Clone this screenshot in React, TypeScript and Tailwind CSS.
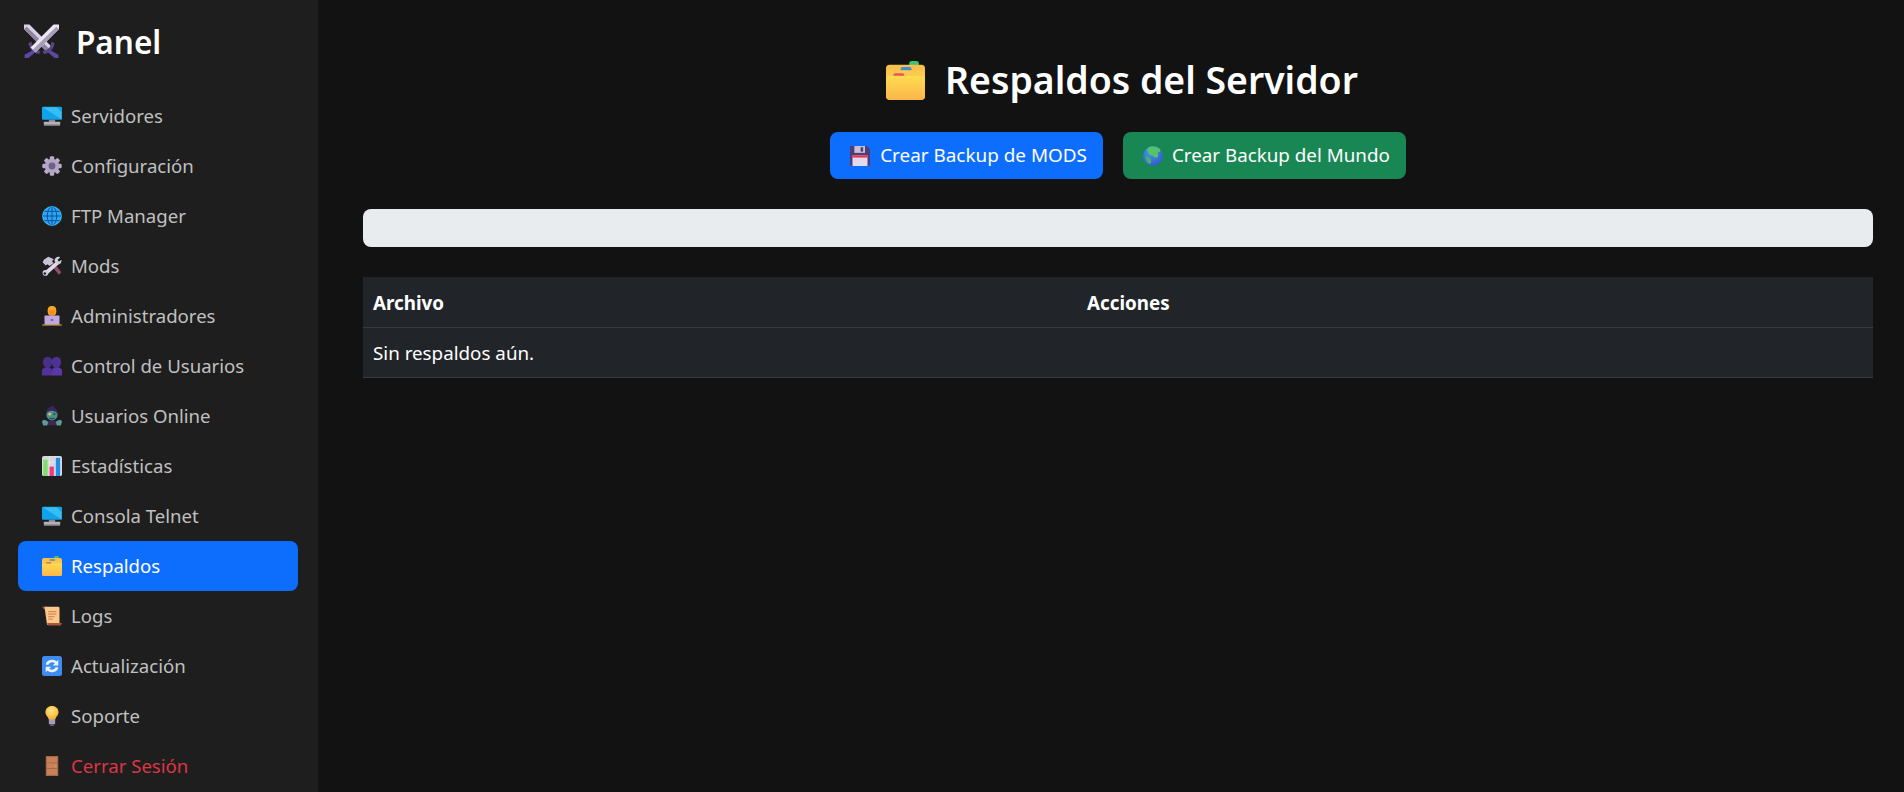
import type { ReactNode } from "react";

type IconProps = { className?: string };

function Emoji({ className, children }: IconProps & { children: ReactNode }) {
  return (
    <svg viewBox="0 0 32 32" className={className} aria-hidden="true">
      {children}
    </svg>
  );
}

function Swords({ className }: IconProps) {
  return (
    <Emoji className={className}>
      <path d="M0 0.5 H5 L26 21.5 L21.5 26 L0 4.5 Z" fill="#d9d2e4" />
      <path d="M0 4.5 L2.5 2.5 L24 23.5 L21.5 26 Z" fill="#8f84a3" />
      <path d="M4 17.5 L7 16 C7 21 10 24 15 24.5 L14 27.5 C9 27 5 23 4 17.5Z" fill="#5a4582" />
      <path d="M32 0.5 H27 L6 21.5 L10.5 26 L32 4.5 Z" fill="#ece7f4" />
      <path d="M32 4.5 L29.5 2.5 L8 23.5 L10.5 26 Z" fill="#a79db8" />
      <path d="M28 17.5 L25 16 C25 21 22 24 17 24.5 L18 27.5 C23 27 27 23 28 17.5Z" fill="#5a4582" />
      <path d="M8 24 L10 26 L4 31 L0.5 31 L0.5 28 Z" fill="#5f47a8" />
      <path d="M24 24 L22 26 L28 31 L31.5 31 L31.5 28 Z" fill="#5f47a8" />
    </Emoji>
  );
}

function Monitor({ className }: IconProps) {
  return (
    <Emoji className={className}>
      <rect x="0" y="1" width="32" height="21" rx="1.5" fill="#0fa3e8" />
      <path d="M1 2 H24 L31 10 V21 Z" fill="#38bdf8" />
      <rect x="11" y="22" width="10" height="4" fill="#8e8b94" />
      <rect x="3" y="25" width="26" height="6" rx="1" fill="#b5b0bc" />
      <rect x="3" y="29" width="26" height="2" fill="#8f8a97" />
    </Emoji>
  );
}

function Gear({ className }: IconProps) {
  const angles = [0, 45, 90, 135, 180, 225, 270, 315];
  return (
    <Emoji className={className}>
      {angles.map((a) => (
        <rect key={a} x="12.5" y="0.5" width="7" height="9" rx="2" fill="#b9abc9" transform={`rotate(${a} 16 16)`} />
      ))}
      <circle cx="16" cy="16" r="11.5" fill="#b3a6c4" />
      <circle cx="16" cy="16" r="5.5" fill="#6f6283" />
    </Emoji>
  );
}

function Globe({ className }: IconProps) {
  return (
    <Emoji className={className}>
      <circle cx="16" cy="16" r="15.5" fill="#2aa5f0" />
      <g fill="none" stroke="#0f4c9e" strokeWidth="1.5">
        <ellipse cx="16" cy="16" rx="7.5" ry="15" />
        <path d="M16 1 V31 M1 16 H31 M3.5 8.5 H28.5 M3.5 23.5 H28.5" />
      </g>
      <circle cx="16" cy="16" r="15" fill="none" stroke="#3cc0f5" strokeWidth="1.2" />
    </Emoji>
  );
}

function Tools({ className }: IconProps) {
  return (
    <Emoji className={className}>
      <path d="M14 14 L18 10 L31 26 L27 30 Z" fill="#8b4f6b" />
      <path d="M3 6 L10 1 L19 5 L16 8 L18 11 L12 16 L9 13 L6 15 L1 10 Z" fill="#cbc3d6" />
      <path d="M24 8 L28 12 L10 28 L5 24 Z" fill="#e2dcea" />
      <path d="M20 8 C20 3 25 0 29 2 L25 6 L27 9 L31 6 C32 11 28 15 23 13 Z" fill="#d6cee0" />
      <circle cx="5.5" cy="27" r="4.5" fill="#d6cee0" />
      <circle cx="4.5" cy="28" r="2" fill="#1e1e1e" />
    </Emoji>
  );
}

function Technologist({ className }: IconProps) {
  return (
    <Emoji className={className}>
      <path d="M7 20 C7 16 11 15 16 15 C21 15 25 16 25 20 V24 H7 Z" fill="#7a5cc0" />
      <path d="M9 8 C9 2 12 0 16 0 C20 0 23 2 23 8 C23 13 21 14 20 15 H12 C11 14 9 13 9 8Z" fill="#f5a623" />
      <path d="M11 8 C13 7 17 7 20.5 5.5 C21 11 19 15 16 15 C13 15 11 12 11 8Z" fill="#f8881f" />
      <rect x="4" y="15" width="24" height="15" rx="1.5" fill="#bfa9de" />
      <rect x="14" y="20.5" width="4" height="3.5" fill="#7c6a9e" />
      <rect x="0" y="29.5" width="32" height="1.5" rx="0.7" fill="#e7b23a" />
    </Emoji>
  );
}

function Users({ className }: IconProps) {
  return (
    <Emoji className={className}>
      <ellipse cx="9" cy="10" rx="7.5" ry="9" fill="#4a2f8a" />
      <ellipse cx="23" cy="10" rx="7.5" ry="9" fill="#4f3296" />
      <path d="M0 31 V24 C0 20 4 18 9 18 C14 18 16 20 16 24 V31 Z" fill="#51329a" />
      <path d="M16 31 V24 C16 20 18 18 23 18 C28 18 32 20 32 24 V31 Z" fill="#5a38a8" />
    </Emoji>
  );
}

function Zombie({ className }: IconProps) {
  return (
    <Emoji className={className}>
      <path d="M8 24 H24 V31 H8 Z" fill="#3a2a55" />
      <circle cx="16" cy="14" r="9" fill="#4f8f8c" />
      <path d="M7 12 C6 4 12 0 21 0 L19 3 C24 4 26 8 25 13 C22 8 17 7 13 8 C10 9 8 10 7 12Z" fill="#3b2560" />
      <circle cx="12.5" cy="13" r="2.2" fill="#d6c26a" />
      <circle cx="19.5" cy="13" r="1.8" fill="#26565a" />
      <path d="M12 19 H20 V21 H12 Z" fill="#27484c" />
      <path d="M0 25 L2 22 L7 23 L10 26 L8 31 H2 Z" fill="#5d9c99" />
      <path d="M32 25 L30 22 L25 23 L22 26 L24 31 H30 Z" fill="#5d9c99" />
    </Emoji>
  );
}

function Chart({ className }: IconProps) {
  return (
    <Emoji className={className}>
      <rect width="32" height="32" rx="3" fill="#d9d6de" />
      <path d="M12 0 V32 M22 0 V32 M0 10 H32" stroke="#f0eef2" strokeWidth="1" />
      <rect x="2" y="6" width="7" height="26" fill="#7be06a" />
      <rect x="12" y="17" width="7" height="15" fill="#ef3b7d" />
      <rect x="22" y="3" width="7" height="29" fill="#1f8fe8" />
    </Emoji>
  );
}

function Folder({ className }: IconProps) {
  return (
    <Emoji className={className}>
      <defs>
        <linearGradient id="folderFront" x1="0" y1="0" x2="0" y2="1">
          <stop offset="0" stopColor="#ffdc4f" />
          <stop offset="1" stopColor="#fcb64b" />
        </linearGradient>
      </defs>
      <rect x="19" y="0" width="8" height="4.5" rx="2" fill="#3fbf6f" />
      <rect x="0" y="3" width="32" height="28" rx="3" fill="#f7c14c" />
      <rect x="12" y="5" width="9" height="3.5" rx="1.7" fill="#3f8fd6" />
      <rect x="0" y="7.5" width="32" height="24" rx="3" fill="#fbc94e" />
      <rect x="6" y="10" width="9" height="3.5" rx="1.7" fill="#f04e63" />
      <rect x="0" y="12" width="32" height="20" rx="3" fill="url(#folderFront)" />
    </Emoji>
  );
}

function Scroll({ className }: IconProps) {
  return (
    <Emoji className={className}>
      <path d="M0 1 H8 V5 H3 Z" fill="#a8553a" />
      <path d="M4 1 H26 C27 1 28 2 28 3 V30 H8 Z" fill="#f9c88a" />
      <path d="M8 27 H32 L30 31 H10 Z" fill="#a8553a" />
      <path d="M10 9 H23 M10 13 H23 M10 17 H20 M10 21 H17" stroke="#d98b57" strokeWidth="2" />
    </Emoji>
  );
}

function Refresh({ className }: IconProps) {
  return (
    <Emoji className={className}>
      <rect width="32" height="32" rx="4" fill="#3f8cf0" />
      <g fill="none" stroke="#eaf3ff" strokeWidth="4">
        <path d="M8 14 C9 8 18 6 23 11" />
        <path d="M24 18 C23 24 14 26 9 21" />
      </g>
      <path d="M26 6 V15 H17 Z" fill="#eaf3ff" />
      <path d="M6 26 V17 H15 Z" fill="#eaf3ff" />
    </Emoji>
  );
}

function Bulb({ className }: IconProps) {
  return (
    <Emoji className={className}>
      <defs>
        <radialGradient id="bulbGlow" cx="0.45" cy="0.35" r="0.7">
          <stop offset="0" stopColor="#ffe78a" />
          <stop offset="1" stopColor="#f7a823" />
        </radialGradient>
      </defs>
      <path d="M16 0 C22 0 26.5 4 26.5 10 C26.5 15 22 17 21 22 H11 C10 17 5.5 15 5.5 10 C5.5 4 10 0 16 0Z" fill="url(#bulbGlow)" />
      <rect x="11" y="21" width="10" height="8" rx="1" fill="#b9afc6" />
      <path d="M11 24 H21 M11 27 H21" stroke="#7f7391" strokeWidth="1" />
      <rect x="13" y="29" width="6" height="3" rx="1" fill="#6b5c80" />
    </Emoji>
  );
}

function Door({ className }: IconProps) {
  return (
    <Emoji className={className}>
      <rect x="6" y="0" width="20" height="32" rx="1" fill="#a8694a" />
      <rect x="8" y="2" width="16" height="28" fill="#c88257" />
      <path d="M8 11 H24 M8 20 H24" stroke="#a8694a" strokeWidth="1.5" />
      <circle cx="22" cy="16" r="1" fill="#f2c14e" />
    </Emoji>
  );
}

function Floppy({ className }: IconProps) {
  return (
    <Emoji className={className}>
      <path d="M0 2 C0 1 1 0 2 0 H27 L32 5 V30 C32 31 31 32 30 32 H2 C1 32 0 31 0 30 Z" fill="#4f3d78" />
      <rect x="7" y="0" width="17" height="11" fill="#c9bfd6" />
      <rect x="17" y="2" width="4" height="7" fill="#4f3d78" />
      <rect x="4" y="15" width="24" height="17" fill="#e2d9ec" />
      <rect x="4" y="15" width="24" height="3.5" fill="#e0364f" />
    </Emoji>
  );
}

function Earth({ className }: IconProps) {
  return (
    <Emoji className={className}>
      <defs>
        <radialGradient id="earthSea" cx="0.4" cy="0.3" r="0.8">
          <stop offset="0" stopColor="#38a0e8" />
          <stop offset="1" stopColor="#3453c4" />
        </radialGradient>
      </defs>
      <circle cx="16" cy="16" r="16" fill="url(#earthSea)" />
      <path d="M8 3 C13 0 22 0 27 5 C29 8 27 10 24 10 C23 13 26 15 23 18 C20 20 18 17 15 15 C11 15 9 13 8 9 C6 8 6 5 8 3Z" fill="#56c26a" />
      <path d="M4 17 C8 16 12 19 13 23 C14 27 11 30 9 28 C6 26 4 21 4 17Z" fill="#4aae72" />
    </Emoji>
  );
}

const navItems = [
  { label: "Servidores", icon: Monitor },
  { label: "Configuración", icon: Gear },
  { label: "FTP Manager", icon: Globe },
  { label: "Mods", icon: Tools },
  { label: "Administradores", icon: Technologist },
  { label: "Control de Usuarios", icon: Users },
  { label: "Usuarios Online", icon: Zombie },
  { label: "Estadísticas", icon: Chart },
  { label: "Consola Telnet", icon: Monitor },
  { label: "Respaldos", icon: Folder, active: true },
  { label: "Logs", icon: Scroll },
  { label: "Actualización", icon: Refresh },
  { label: "Soporte", icon: Bulb },
  { label: "Cerrar Sesión", icon: Door, danger: true },
];

export default function App() {
  return (
    <div className="flex h-screen overflow-hidden bg-[#121212] font-['Noto_Sans','Open_Sans',sans-serif] text-white">
      <aside className="flex w-[318px] shrink-0 flex-col bg-[#1e1e1e] pl-[18px] pr-[20px]">
        <div className="flex h-[91px] items-center gap-[17px] pb-[8px] pl-[6px]">
          <Swords className="h-[35px] w-[35px]" />
          <span className="text-[31.5px] font-semibold leading-none">Panel</span>
        </div>
        <nav className="flex flex-col">
          {navItems.map((item) => (
            <a
              key={item.label}
              href="#"
              className={`flex h-[50px] items-center gap-[9px] rounded-[8px] pl-[24px] text-[18.6px] ${
                item.active
                  ? "bg-[#0d6efd] text-white"
                  : item.danger
                    ? "text-[#dc3545]"
                    : "text-[#c0c0c0]"
              }`}
            >
              <item.icon className="h-[20px] w-[20px] shrink-0" />
              {item.label}
            </a>
          ))}
        </nav>
      </aside>

      <main className="flex min-w-0 flex-1 flex-col pl-[45px] pr-[31px]">
        <h1 className="mt-[50px] flex h-[60px] items-center justify-center gap-[20px] pl-[8px] text-[37.4px] font-semibold">
          <Folder className="h-[39px] w-[39px]" />
          Respaldos del Servidor
        </h1>

        <div className="mt-[22px] flex justify-center gap-[20px]">
          <button className="flex h-[47px] items-center gap-[10px] rounded-[8px] bg-[#0d6efd] pl-[20px] pr-[16px] text-[18.9px]">
            <Floppy className="h-[20px] w-[20px]" />
            Crear Backup de MODS
          </button>
          <button className="flex h-[47px] items-center gap-[9px] rounded-[8px] bg-[#198754] pl-[20px] pr-[16px] text-[18.8px]">
            <Earth className="h-[20px] w-[20px]" />
            Crear Backup del Mundo
          </button>
        </div>

        <div className="mt-[30px] h-[37.6px] rounded-[8px] bg-[#e9ecef]" />

        <table className="mt-[30px] w-full border-collapse bg-[#212529] text-left text-[18.8px]">
          <thead>
            <tr className="h-[51px] border-b border-[#373b3e]">
              <th className="w-[714px] px-[10px] pt-[2px] font-bold">Archivo</th>
              <th className="px-[10px] pt-[2px] font-bold">Acciones</th>
            </tr>
          </thead>
          <tbody>
            <tr className="h-[50px] border-b border-[#373b3e]">
              <td colSpan={2} className="px-[10px]">
                Sin respaldos aún.
              </td>
            </tr>
          </tbody>
        </table>
      </main>
    </div>
  );
}
